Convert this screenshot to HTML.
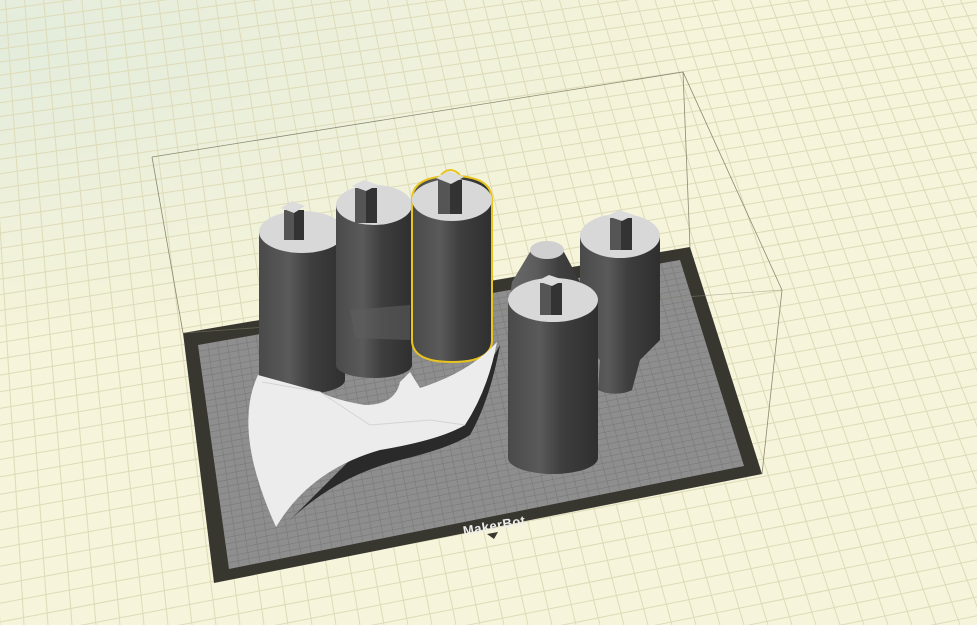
<!DOCTYPE html>
<html><head><meta charset="utf-8"><style>
html,body{margin:0;padding:0;width:977px;height:625px;overflow:hidden;background:#f5f3d7}
svg{display:block;overflow:hidden}
</style></head><body>
<svg id="s" width="977" height="625" viewBox="0 0 977 625" xmlns="http://www.w3.org/2000/svg">
<defs>
<radialGradient id="bg" cx="0" cy="0" r="1" gradientUnits="userSpaceOnUse" gradientTransform="translate(0 40) scale(700 300)">
<stop offset="0" stop-color="#e3ecdc"/><stop offset="1" stop-color="#f6f4da"/></radialGradient>
<linearGradient id="cyl" x1="0" x2="1" y1="0" y2="0">
<stop offset="0" stop-color="#4a4a4a"/><stop offset="0.35" stop-color="#5a5a5a"/><stop offset="0.6" stop-color="#3e3e3e"/><stop offset="1" stop-color="#2f2f2f"/></linearGradient>
<linearGradient id="cyl2" x1="0" x2="1" y1="0" y2="0">
<stop offset="0" stop-color="#6a6a6a"/><stop offset="0.4" stop-color="#5c5c5c"/><stop offset="0.7" stop-color="#3f3f3f"/><stop offset="1" stop-color="#383838"/></linearGradient>
<clipPath id="pc"><polygon points="198,345 680,260 744,466 229,569"/></clipPath>
</defs>
<rect width="977" height="625" fill="url(#bg)"/>
<g id="grid" stroke="#dedbb8" stroke-width="1" fill="none"></g>
<polygon points="183,333 690,247 762,474 214,583" fill="#38372f"/>
<polygon points="198,345 680,260 744,466 229,569" fill="#8e8e8e"/>
<g id="pgrid" stroke="#7c7c7c" stroke-width="0.7" fill="none" clip-path="url(#pc)"></g>
<g stroke="#8b8a70" stroke-width="0.8" fill="none">
<polyline points="152,157 683,72 782,290"/>
<line x1="152" y1="157" x2="183" y2="333"/>
<line x1="683" y1="72" x2="690" y2="247"/>
<line x1="782" y1="290" x2="762" y2="474"/>
<line x1="183" y1="333" x2="782" y2="290" stroke-opacity="0.5"/>
</g>
<path d="M259,232 L259,380 A43,14 0 0 0 345,380 L345,232 Z" fill="url(#cyl)"/>
<ellipse cx="302" cy="232" rx="43" ry="21" fill="#d8d8d8"/>
<rect x="284" y="210" width="20" height="30" fill="#333"/><rect x="284" y="210" width="10" height="30" fill="#555"/>
<polygon points="281,208 292,201 305,206 294,213" fill="#dcdcdc"/>
<path d="M336,205 L336,365 A38,13 0 0 0 412,365 L412,205 Z" fill="url(#cyl)"/>
<path d="M350,310 L410,305 L410,340 L355,338 Z" fill="#5e5e5e" opacity="0.6"/>
<ellipse cx="374" cy="205" rx="38" ry="20" fill="#d8d8d8"/>
<rect x="355" y="188" width="22" height="35" fill="#333"/><rect x="355" y="188" width="11" height="35" fill="#555"/>
<polygon points="352,186 364,180 378,185 366,191" fill="#dcdcdc"/>
<path d="M412,200 Q412,176 452,176 Q492,176 492,200 L492,340 Q492,362 452,362 Q412,362 412,340 Z" fill="url(#cyl)" stroke="#e8c41c" stroke-width="2"/>
<path d="M441,175 Q450,165 460,175" fill="none" stroke="#e8c41c" stroke-width="2"/>
<ellipse cx="452" cy="200" rx="40" ry="21" fill="#d8d8d8"/>
<rect x="438" y="180" width="24" height="34" fill="#333"/><rect x="438" y="180" width="12" height="34" fill="#555"/>
<polygon points="436,178 449,171 464,177 451,184" fill="#dcdcdc"/>
<path d="M580,236 L580,340 L600,360 L598,390 A22,10 0 0 0 632,390 L640,360 L660,340 L660,236 Z" fill="url(#cyl)"/>
<ellipse cx="620" cy="236" rx="40" ry="22" fill="#d8d8d8"/>
<rect x="610" y="218" width="22" height="32" fill="#333"/><rect x="610" y="218" width="11" height="32" fill="#555"/>
<polygon points="607,216 619,210 634,215 622,221" fill="#dcdcdc"/>
<path d="M512,282 L530,252 Q547,236 564,252 L580,282 L580,310 L508,310 Z" fill="url(#cyl2)"/>
<ellipse cx="547" cy="250" rx="17" ry="9" fill="#d0d0d0"/>
<path d="M508,300 L508,458 A45,16 0 0 0 598,458 L598,300 Z" fill="url(#cyl)"/>
<ellipse cx="553" cy="300" rx="45" ry="22" fill="#d8d8d8"/>
<rect x="540" y="283" width="22" height="32" fill="#333"/><rect x="540" y="283" width="11" height="32" fill="#555"/>
<polygon points="537,281 549,275 564,280 552,286" fill="#dcdcdc"/>
<!-- axe shadow -->
<path d="M282,528 Q330,478 400,460 Q450,448 470,435 Q490,400 500,345 L480,380 L440,420 L360,450 Z" fill="#2a2a2a"/>
<path d="M258,375 Q232,430 276,527 Q310,470 380,450 Q440,440 465,425 Q488,390 497,342 Q470,372 420,388 L410,372 L400,382 Q395,405 365,405 Q335,400 320,392 Z" fill="#ececec"/>
<path d="M262,382 L320,392 L370,425 L430,420 L465,425" fill="none" stroke="#d4d4d4" stroke-width="1"/>
<text x="495" y="530" font-family="Liberation Sans, sans-serif" font-size="13" font-weight="bold" fill="#eeeeee" transform="rotate(-10 495 530)" text-anchor="middle" letter-spacing="0.5">MakerBot</text>
<polygon points="487,534 498,532 494,539" fill="#38372f"/>
</svg>
<script>
(function(){
var ns="http://www.w3.org/2000/svg";
var g=document.getElementById('grid');
function ln(p,a,b,c,d){var l=document.createElementNS(ns,'line');l.setAttribute('x1',a);l.setAttribute('y1',b);l.setAttribute('x2',c);l.setAttribute('y2',d);p.appendChild(l);}
var vx=-160,vy=-2435;
for(var k=-60;k<80;k++){var x=k*24;ln(g,vx,vy,x,625);}
var y=-60;
while(y<800){var t=Math.max(0,y/625);var s=-0.14-0.06*t;ln(g,0,y+500*(-s),977,y-477*(-s));y+=13+6*t;}
var pg=document.getElementById('pgrid');
var P=[[198,345],[680,260],[744,466],[229,569]];
function lerp(a,b,t){return [a[0]+(b[0]-a[0])*t,a[1]+(b[1]-a[1])*t];}
var n=50;
for(var i=1;i<n;i++){var t=i/n;var a=lerp(P[0],P[1],t),b=lerp(P[3],P[2],t);ln(pg,a[0],a[1],b[0],b[1]);}
var m=36;
for(var i=1;i<m;i++){var t=i/m;var a=lerp(P[0],P[3],t),b=lerp(P[1],P[2],t);ln(pg,a[0],a[1],b[0],b[1]);}
})();
</script>
</body></html>
